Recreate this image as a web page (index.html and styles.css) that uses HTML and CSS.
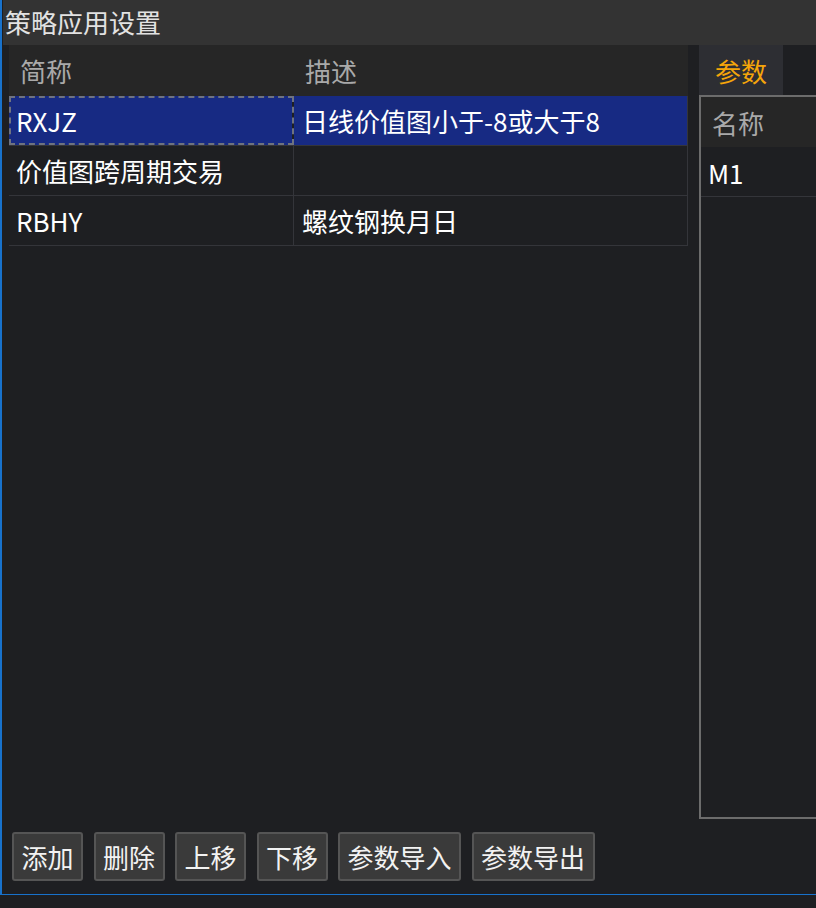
FILE: index.html
```html
<!DOCTYPE html>
<html lang="zh">
<head>
<meta charset="utf-8">
<title>策略应用设置</title>
<link rel="stylesheet" href="styles.css">
</head>
<body>
<div class="window">
  <div class="titlebar">策略应用设置</div>
  <div class="content">
    <div class="left">
      <div class="thead">
        <div class="th c1">简称</div>
        <div class="th c2">描述</div>
      </div>
      <div class="row selected">
        <div class="td c1 focus">RXJZ</div>
        <div class="td c2">日线价值图小于-8或大于8</div>
      </div>
      <div class="row">
        <div class="td c1">价值图跨周期交易</div>
        <div class="td c2"></div>
      </div>
      <div class="row">
        <div class="td c1">RBHY</div>
        <div class="td c2">螺纹钢换月日</div>
      </div>
    </div>
    <div class="right">
      <div class="tabs">
        <div class="tab">参数</div>
      </div>
      <div class="box">
        <div class="bhead">名称</div>
        <div class="brow">M1</div>
      </div>
    </div>
  </div>
  <div class="buttons">
    <button class="btn">添加</button>
    <button class="btn">删除</button>
    <button class="btn">上移</button>
    <button class="btn">下移</button>
    <button class="btn">参数导入</button>
    <button class="btn">参数导出</button>
  </div>
</div>
</body>
</html>
```

FILE: styles.css
```css
html, body {
  margin: 0;
  padding: 0;
  background: #1e1f22;
}
body {
  width: 816px;
  height: 908px;
  overflow: hidden;
  font-family: "Noto Sans CJK SC", "Noto Sans", sans-serif;
  font-size: 26px;
  color: #ffffff;
}
.window {
  height: 895px;
  box-sizing: border-box;
  border-left: 2px solid #1872cc;
  border-bottom: 1px solid #1872cc;
  display: flex;
  flex-direction: column;
  overflow: hidden;
}
.titlebar {
  height: 45px;
  margin-left: 1px;
  background: #333333;
  color: #e2e2e2;
  line-height: 43px;
  padding-left: 2px;
  flex: none;
}
.content {
  flex: 1;
  display: flex;
  min-height: 0;
}
.left {
  width: 679px;
  margin-left: 7px;
  flex: none;
}
.thead {
  height: 51px;
  background: #262626;
  display: flex;
  align-items: center;
  color: #a9a9a9;
}
.th.c1 { width: 284px; padding-left: 11px; box-sizing: border-box; }
.th.c2 { padding-left: 12px; }
.row {
  height: 50px;
  display: flex;
  box-sizing: border-box;
  border-bottom: 1px solid #34353a;
  border-right: 1px solid #34353a;
}
.td {
  display: flex;
  align-items: center;
  box-sizing: border-box;
  white-space: nowrap;
}
.td.c1 {
  width: 285px;
  padding-left: 7px;
  border-right: 1px solid #34353a;
}
.td.c2 {
  flex: 1;
  padding-left: 8px;
}
.row.selected .td {
  background: #172a83;
}
.row.selected .td.c1 {
  border-right: 2px solid #1e1f22;
}
.td.focus {
  outline: 2px dashed #6f7380;
  outline-offset: -2px;
}
.right {
  margin-left: 11px;
  flex: 1;
  display: flex;
  flex-direction: column;
  min-width: 0;
  overflow: hidden;
}
.tabs {
  height: 50px;
  display: flex;
  flex: none;
}
.tab {
  width: 84px;
  background: #2d2e33;
  color: #f5a50a;
  display: flex;
  align-items: center;
  justify-content: center;
}
.box {
  flex: 1;
  width: 160px;
  border: 2px solid #6c6c6c;
  margin-bottom: 1px;
}
.bhead {
  height: 50px;
  background: #262626;
  color: #a9a9a9;
  display: flex;
  align-items: center;
  padding-left: 11px;
}
.brow {
  height: 50px;
  box-sizing: border-box;
  border-bottom: 1px solid #34353a;
  display: flex;
  align-items: center;
  padding-left: 7px;
  padding-top: 2px;
}
.buttons {
  flex: none;
  height: 74px;
  box-sizing: border-box;
  padding: 12px 0 0 10px;
  display: flex;
  gap: 10.5px;
  align-items: flex-start;
}
.btn {
  height: 49px;
  padding: 0 7.5px;
  background: #3a3a3a;
  border: 2px solid #555555;
  border-radius: 3px;
  color: #f2f2f2;
  font-family: "Noto Sans CJK SC", "Noto Sans", sans-serif;
  font-size: 26px;
  line-height: 1;
}
```
